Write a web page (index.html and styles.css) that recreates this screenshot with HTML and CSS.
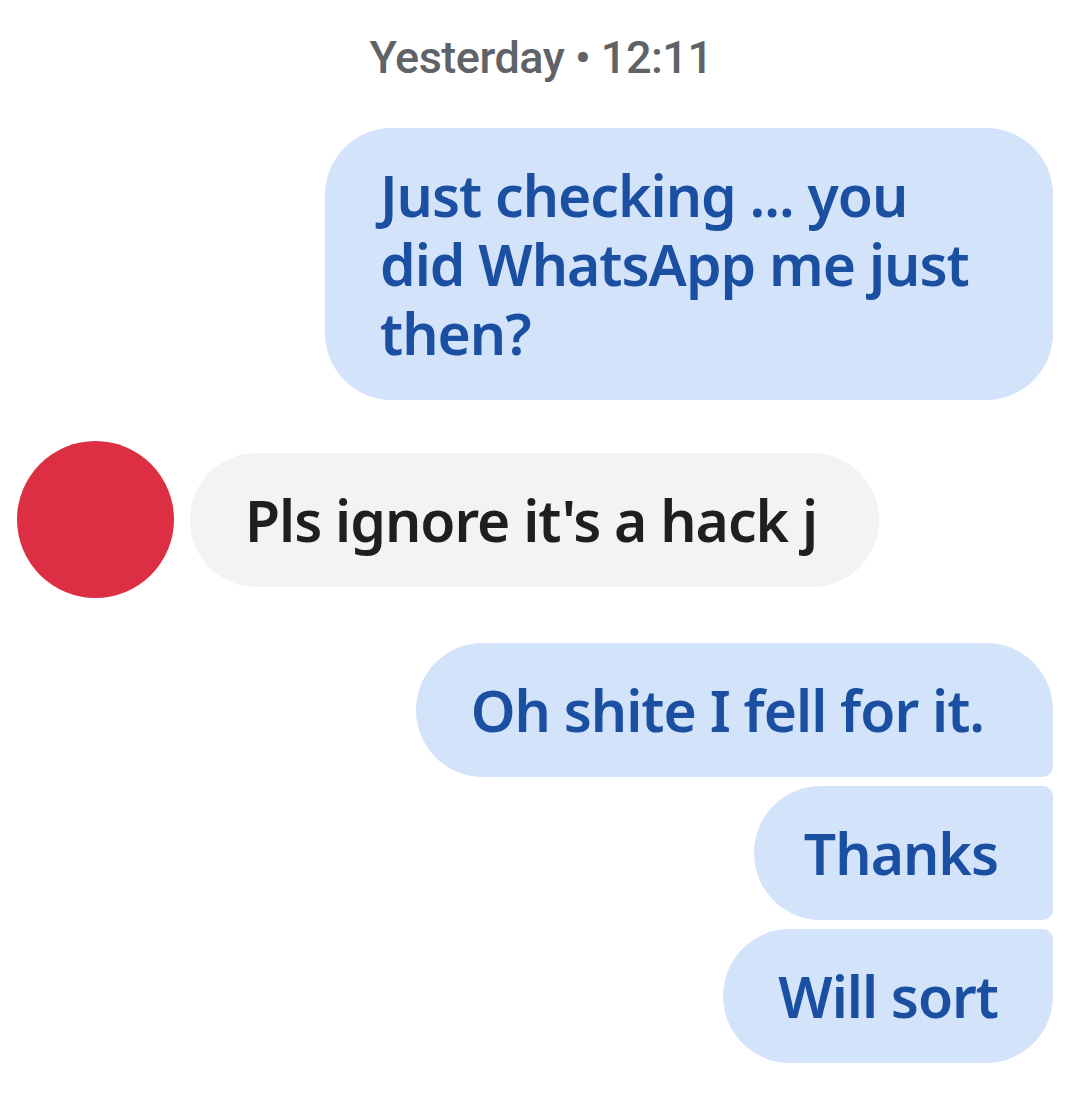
FILE: index.html
```html
<!DOCTYPE html>
<html lang="en">
<head>
<meta charset="utf-8">
<link rel="stylesheet" href="styles.css">
</head>
<body>
<div class="chat">
  <div class="stamp">Yesterday • 12:11</div>
  <div class="row out">
    <div class="bubble sent">Just checking ... you did WhatsApp me just then?</div>
  </div>
  <div class="row in">
    <div class="avatar"></div>
    <div class="bubble recv">Pls ignore it's a hack j</div>
  </div>
  <div class="group">
    <div class="row out"><div class="bubble sent first">Oh shite I fell for it.</div></div>
    <div class="row out"><div class="bubble sent mid">Thanks</div></div>
    <div class="row out"><div class="bubble sent last">Will sort</div></div>
  </div>
</div>
</body>
</html>
```
FILE: styles.css
```css
html, body {
  margin: 0;
  padding: 0;
  background: #ffffff;
}
.chat {
  width: 1079px;
  display: flex;
  flex-direction: column;
  padding: 34px 26px 0 17px;
  box-sizing: border-box;
}
.stamp {
  font-family: Roboto, "Liberation Sans", sans-serif;
  font-weight: 500;
  font-size: 45px;
  line-height: 48px;
  color: #5f6368;
  text-align: center;
  padding-left: 12px;
  letter-spacing: -0.5px;
}
.row {
  display: flex;
  align-items: center;
}
.row.out {
  justify-content: flex-end;
}
.row.in {
  gap: 16px;
}
.bubble {
  font-family: "Noto Sans", "Open Sans", sans-serif;
  font-weight: 600;
  font-size: 57px;
  line-height: 69px;
  padding: 33px 55px 32px 55px;
  border-radius: 67px;
  box-sizing: border-box;
  max-width: 728px;
  letter-spacing: -1px;
}
.sent {
  background: #d3e3fa;
  color: #1b4fa2;
}
.recv {
  background: #f1f3f4;
  color: #1f1f1f;
  padding-right: 62px;
}
.chat > .row.out {
  margin-top: 46px;
}
.chat > .row.in {
  margin-top: 41px;
}
.avatar {
  width: 157px;
  height: 157px;
  border-radius: 50%;
  background: #dd2f44;
  flex: none;
}
.group {
  margin-top: 45px;
  display: flex;
  flex-direction: column;
  gap: 9px;
}
.first {
  border-bottom-right-radius: 10px;
  padding-right: 69px;
}
.mid {
  border-top-right-radius: 10px;
  border-bottom-right-radius: 10px;
  padding-left: 50px;
}
.last {
  border-top-right-radius: 10px;
}
```
